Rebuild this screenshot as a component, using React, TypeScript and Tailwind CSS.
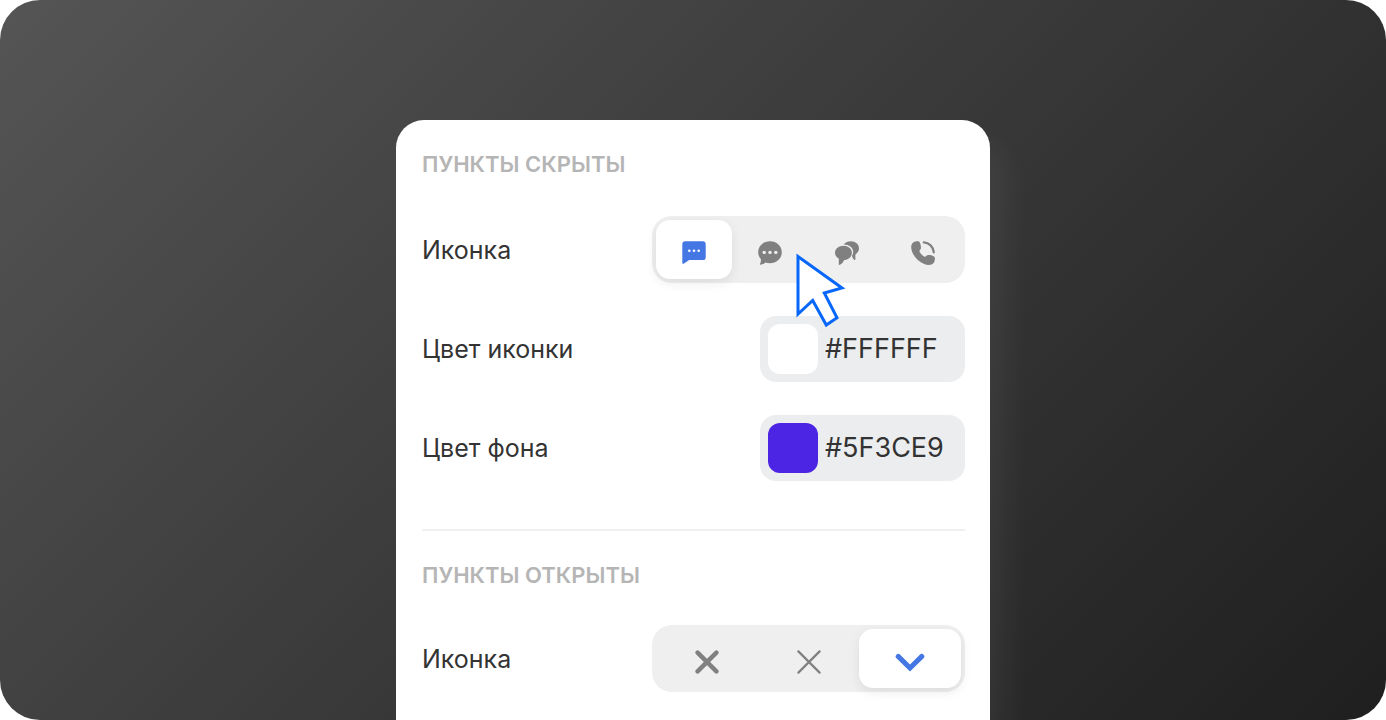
import type { ReactNode } from 'react';

function ChatSquareIcon() {
	return (
		<svg width="24" height="24" viewBox="0 0 24 24" aria-hidden="true">
			<path
				d="M3.2 0.3H20.8Q23.7 0.3 23.7 3.2V16.2Q23.7 19.1 20.8 19.1H7.2L2 22.6Q0.3 23.5 0.3 21.6V3.2Q0.3 0.3 3.2 0.3Z"
				fill="#4477e3"
			/>
			<circle cx="7.3" cy="9.7" r="1.3" fill="#fff" />
			<circle cx="12" cy="9.7" r="1.3" fill="#fff" />
			<circle cx="16.7" cy="9.7" r="1.3" fill="#fff" />
		</svg>
	);
}

function ChatRoundIcon() {
	return (
		<svg width="24" height="24" viewBox="0 0 24 24" aria-hidden="true">
			<path
				d="M12 0.3C18.6 0.3 23.8 5 23.8 11.2S18.6 22.2 12 22.2C10.4 22.2 8.8 21.9 7.5 21.4C6 22.8 4.3 23.6 2.3 23.8C1.8 23.8 1.7 23.3 2 22.9C2.8 21.6 3.1 19.9 2.9 18C1.2 16.2 0.2 13.8 0.2 11.2C0.2 5 5.4 0.3 12 0.3Z"
				fill="#808080"
			/>
			<circle cx="6.2" cy="11.4" r="1.7" fill="#efefef" />
			<circle cx="12" cy="11.4" r="1.7" fill="#efefef" />
			<circle cx="17.8" cy="11.4" r="1.7" fill="#efefef" />
		</svg>
	);
}

function ChatsIcon() {
	return (
		<svg width="24" height="24" viewBox="0 0 24 24" fill="#808080" aria-hidden="true">
			<path d="M8.8 3.4C10.5 1.3 13 0.2 15.8 0.2C20.4 0.2 24 3.2 24 7.3C24 10 22.5 12.2 20.4 13.4V18.3Q20.2 19.5 19.1 18.8C17.9 17.6 17.2 16.3 17 14.8C17.9 13.4 18.3 12.1 18.2 10.7C18 6.4 14 3.4 8.8 3.4Z" />
			<path d="M8.5 4.7C13.2 4.7 16.9 7.7 16.9 11.8S13.2 19 9.1 19C8.4 21 6.9 22.8 4.8 23.8Q3.8 24.2 3.8 23V17.6C1.5 16.3 0 14.3 0 11.8C0 7.7 3.8 4.7 8.5 4.7Z" />
		</svg>
	);
}

function PhoneIcon() {
	return (
		<svg width="24" height="24" viewBox="0 0 24 24" aria-hidden="true">
			<path
				d="M2.4 1.2C4.3 0 6.8 0 8.2 0.6C9.6 2.7 10.1 5 9.9 7.6C9.8 8.8 8.6 9 8.4 9.9C8.1 11.4 12 15.4 13.9 15.7C15 15.8 15.3 14.4 16.4 14.2C19 13.9 21.6 14.4 23.4 15.8C24.3 17.4 24 20 22.8 21.7C20.7 24.3 16.9 24.5 12.7 22.7C7.4 20.5 3.2 16.2 1.1 10.8C-0.3 7 -0.2 3.3 2.4 1.2Z"
				fill="#808080"
			/>
			<path
				d="M12.8 1.3C18.2 1.7 22.3 5.8 22.8 11.4"
				stroke="#808080"
				strokeWidth="2.2"
				strokeLinecap="round"
				fill="none"
			/>
		</svg>
	);
}

function CrossBoldIcon() {
	return (
		<svg width="24" height="24" viewBox="0 0 24 24" aria-hidden="true">
			<path
				d="M2.6 2.6L21.4 21.4M21.4 2.6L2.6 21.4"
				stroke="#808080"
				strokeWidth="4.4"
				strokeLinecap="round"
			/>
		</svg>
	);
}

function CrossThinIcon() {
	return (
		<svg width="24" height="24" viewBox="0 0 24 24" aria-hidden="true">
			<path
				d="M1.4 1.4L22.6 22.6M22.6 1.4L1.4 22.6"
				stroke="#808080"
				strokeWidth="2.2"
				strokeLinecap="round"
			/>
		</svg>
	);
}

function ChevronIcon() {
	return (
		<svg width="30" height="24" viewBox="0 0 30 24" fill="none" aria-hidden="true">
			<path
				d="M3.2 6.4L15 18L26.8 6.4"
				stroke="#4477e3"
				strokeWidth="5"
				strokeLinecap="round"
			/>
		</svg>
	);
}

function PointerIcon() {
	return (
		<svg width="60" height="90" viewBox="0 0 60 90" aria-hidden="true">
			<path
				d="M8 12.5V70L22.7 56.5L36.3 81L47 73.8L34.3 49L52 44Z"
				fill="#fff"
				stroke="#0867fb"
				strokeWidth="3"
			/>
		</svg>
	);
}

type Option = { value: string; icon: ReactNode };

const closedOptions: Option[] = [
	{ value: 'square', icon: <ChatSquareIcon /> },
	{ value: 'round', icon: <ChatRoundIcon /> },
	{ value: 'chats', icon: <ChatsIcon /> },
	{ value: 'phone', icon: <PhoneIcon /> },
];

const openedOptions: Option[] = [
	{ value: 'cross-bold', icon: <CrossBoldIcon /> },
	{ value: 'cross-thin', icon: <CrossThinIcon /> },
	{ value: 'chevron', icon: <ChevronIcon /> },
];

function IconPicker({ name, options, selected }: { name: string; options: Option[]; selected: string }) {
	return (
		<fieldset className="flex items-center justify-between">
			<legend className="float-left text-[25px] leading-8 text-[#333]">Иконка</legend>
			<div className="flex h-[67px] w-[313px] rounded-[20px] bg-[#efefef] p-1">
				{options.map((option) => (
					<label
						key={option.value}
						className="flex flex-1 cursor-pointer items-center justify-center rounded-[14px] pt-1.5 has-checked:bg-white has-checked:shadow-[0_4px_12px_rgba(0,0,0,0.08)]">
						<input
							type="radio"
							name={name}
							value={option.value}
							aria-label={option.value}
							defaultChecked={option.value === selected}
							className="sr-only"
						/>
						{option.icon}
					</label>
				))}
			</div>
		</fieldset>
	);
}

function ColorField({ id, label, value, swatch }: { id: string; label: string; value: string; swatch: string }) {
	return (
		<div className="flex items-center justify-between">
			<label htmlFor={id} className="text-[25px] leading-8 text-[#333]">
				{label}
			</label>
			<div className="flex h-[66px] w-[205px] items-center gap-[7px] rounded-2xl bg-[#ecedef] px-2">
				<button
					type="button"
					aria-label={label}
					className={`size-[50px] shrink-0 rounded-xl ${swatch}`}></button>
				<input
					id={id}
					type="text"
					defaultValue={value}
					className="w-full min-w-0 bg-transparent text-[27px] leading-8 text-[#333] outline-none"
				/>
			</div>
		</div>
	);
}

function App() {
	return (
		<main className="flex h-screen justify-center overflow-hidden rounded-[40px] bg-linear-135 from-[#555] to-[#1f1f1f] pt-[120px] font-['Inter',sans-serif]">
			{/* <Card> */}
			<div className="relative w-[594px] rounded-t-[28px] bg-white pr-[25px] pl-[26px] shadow-[16px_24px_32px_rgba(255,255,255,0.06)]">
				{/* <Closed> */}
				<section className="border-b-2 border-[#f0f0f0] pt-7 pb-12">
					<h2 className="text-[22px] leading-8 font-semibold text-[#b5b5b5]">ПУНКТЫ СКРЫТЫ</h2>
					<div className="mt-9 space-y-[33px]">
						<IconPicker name="closed-icon" options={closedOptions} selected="square" />
						<ColorField id="icon-color" label="Цвет иконки" value="#FFFFFF" swatch="bg-white" />
						<ColorField id="background-color" label="Цвет фона" value="#5F3CE9" swatch="bg-[#4c24e3]" />
					</div>
				</section>
				{/* </Closed> */}

				{/* <Opened> */}
				<section className="pt-7">
					<h2 className="text-[22px] leading-8 font-semibold text-[#b5b5b5]">ПУНКТЫ ОТКРЫТЫ</h2>
					<div className="mt-[34px]">
						<IconPicker name="opened-icon" options={openedOptions} selected="chevron" />
					</div>
				</section>
				{/* </Opened> */}

				{/* <Pointer> */}
				<div className="pointer-events-none absolute top-[124px] left-[394px]">
					<PointerIcon />
				</div>
				{/* </Pointer> */}
			</div>
			{/* </Card> */}
		</main>
	);
}

export default App;
